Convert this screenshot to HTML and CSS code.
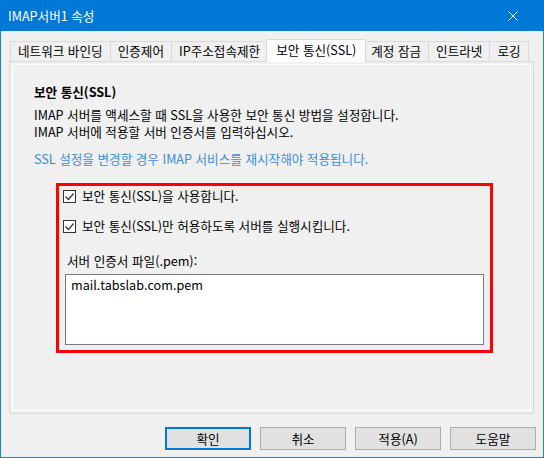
FILE: index.html
```html
<!DOCTYPE html>
<html lang="ko">
<head>
  <meta charset="UTF-8" />
  <title>IMAP서버1 속성</title>
  <link rel="stylesheet" href="styles.css">
</head>
<body>
  <div class="window">
    <div class="titlebar">
      <span class="title">IMAP서버1 속성</span>
      <svg class="close" width="10" height="10" viewBox="0 0 10 10">
        <path d="M0.5 0.5 L9.5 9.5 M9.5 0.5 L0.5 9.5" stroke="#fff" stroke-width="1" fill="none"/>
      </svg>
    </div>

    <div class="sheet">
      <div class="tabs">
        <div class="tab">네트워크 바인딩</div>
        <div class="tab">인증제어</div>
        <div class="tab">IP주소접속제한</div>
        <div class="tab active">보안 통신(SSL)</div>
        <div class="tab">계정 잠금</div>
        <div class="tab">인트라넷</div>
        <div class="tab">로깅</div>
      </div>

      <div class="panel">
        <h2 class="heading">보안 통신(SSL)</h2>
        <p class="desc">
          IMAP 서버를 액세스할 때 SSL을 사용한 보안 통신 방법을 설정합니다.<br>
          IMAP 서버에 적용할 서버 인증서를 입력하십시오.
        </p>
        <p class="notice">SSL 설정을 변경할 경우 IMAP 서비스를 재시작해야 적용됩니다.</p>

        <div class="group">
          <label class="check">
            <span class="box">
              <svg width="11" height="11" viewBox="0 0 11 11">
                <path d="M1.5 5.5 L4.5 8.5 L9.5 2.5" stroke="#333" stroke-width="1.2" fill="none"/>
              </svg>
            </span>
            보안 통신(SSL)을 사용합니다.
          </label>
          <label class="check">
            <span class="box">
              <svg width="11" height="11" viewBox="0 0 11 11">
                <path d="M1.5 5.5 L4.5 8.5 L9.5 2.5" stroke="#333" stroke-width="1.2" fill="none"/>
              </svg>
            </span>
            보안 통신(SSL)만 허용하도록 서버를 실행시킵니다.
          </label>

          <div class="field-label">서버 인증서 파일(.pem):</div>
          <div class="textbox">mail.tabslab.com.pem</div>
        </div>
      </div>
    </div>

    <div class="buttons">
      <button class="btn default">확인</button>
      <button class="btn">취소</button>
      <button class="btn">적용(A)</button>
      <button class="btn">도움말</button>
    </div>
  </div>
</body>
</html>
```

FILE: styles.css
```css
* {
  box-sizing: border-box;
}

body {
  margin: 0;
  font-family: "Noto Sans CJK KR", "Noto Sans", sans-serif;
  font-size: 12.6px;
  color: #000;
  background: #f0f0f0;
}

.window {
  width: 544px;
  height: 458px;
  background: #f0f0f0;
  border: 1px solid #1883d7;
  border-top: none;
}

.titlebar {
  height: 31px;
  margin: 0 -1px;
  padding: 0 26px 0 8px;
  background: #0078d7;
  color: #fff;
  display: flex;
  align-items: center;
  justify-content: space-between;
}

.title {
  line-height: 16px;
}

/* tab strip + page */
.sheet {
  margin: 8px 9px 0 8px;
}

.tabs {
  display: flex;
  align-items: flex-end;
  height: 22px;
  padding-left: 1px;
}

.tab {
  height: 20px;
  padding: 0 7px;
  line-height: 18px;
  background: #f0f0f0;
  border: 1px solid #d9d9d9;
  border-bottom: none;
  white-space: nowrap;
}

.tab + .tab {
  margin-left: -1px;
}

.tab.active {
  position: relative;
  z-index: 1;
  height: 23px;
  margin: 0 -2px -1px -2px;
  padding: 0 9px;
  line-height: 20px;
  background: #fff;
}

.tab.active + .tab {
  margin-left: -1px;
}

.panel {
  height: 353px;
  padding: 22px 24px 0 24px;
  border: 1px solid #d9d9d9;
  box-shadow: inset 0 0 0 2px #f0f0f0, inset 0 0 0 3px #fff;
}

.heading {
  margin: 0;
  font-size: 12.6px;
  font-weight: bold;
  line-height: 16px;
}

.desc {
  margin: 6px 0 0 0;
  line-height: 17px;
}

.notice {
  margin: 11px 0 0 0;
  line-height: 16px;
  color: #3a8ddb;
}

/* highlighted option group */
.group {
  width: 437px;
  margin: 16px 0 0 22px;
  padding: 2px 6px 5px 4px;
  border: 3px solid #ff0000;
}

.check {
  display: flex;
  align-items: center;
  height: 16px;
  line-height: 16px;
  white-space: nowrap;
}

.check + .check {
  margin-top: 14px;
}

.box {
  width: 13px;
  height: 13px;
  margin-right: 6px;
  border: 1px solid #333;
  background: #fff;
  display: flex;
  align-items: center;
  justify-content: center;
}

.field-label {
  margin: 19px 0 0 4px;
  line-height: 16px;
}

.textbox {
  height: 71px;
  margin: 5px 0 0 2px;
  padding: 2px 5px;
  line-height: 16px;
  background: #fff;
  border: 1px solid #7a7a7a;
}

.buttons {
  display: flex;
  justify-content: flex-end;
  gap: 9px;
  margin: 13px 7px 0 0;
}

.btn {
  width: 86px;
  height: 23px;
  padding: 0;
  font-family: inherit;
  font-size: 12.6px;
  color: #000;
  background: #e1e1e1;
  border: 1px solid #adadad;
}

.btn.default {
  border: 2px solid #0078d7;
}
```
